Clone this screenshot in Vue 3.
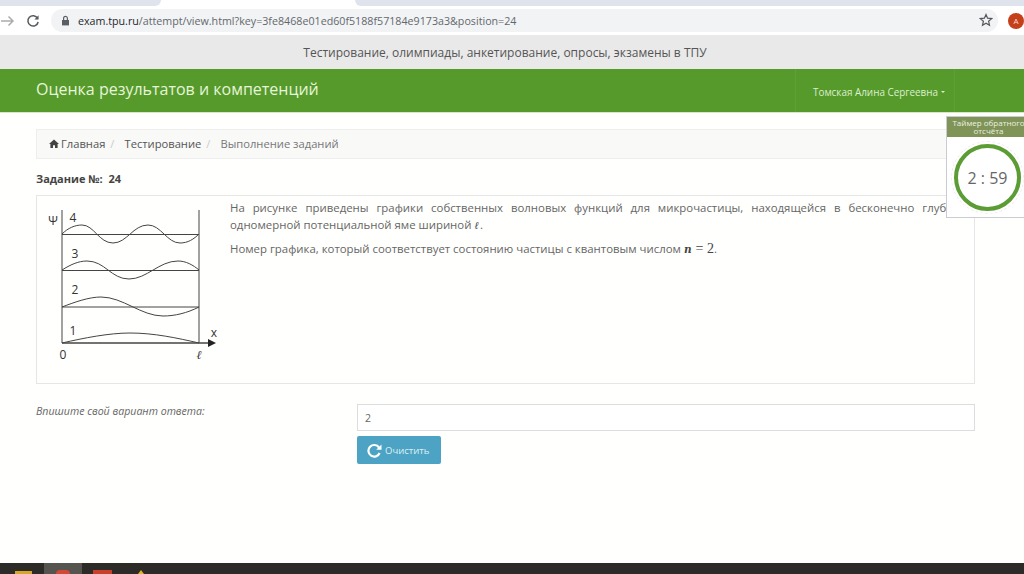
<template>
  <div class="page">
    <div class="tabs">
      <div class="tab t1"></div>
      <div class="tab t2"></div>
    </div>
    <div class="toolbar">
      <svg class="nav-ic" width="14" height="14" viewBox="0 0 14 14"><path d="M0 7H12M7.5 2.5L12 7L7.5 11.5" fill="none" stroke="#a9acaf" stroke-width="1.5"/></svg>
      <svg class="reload" width="14" height="14" viewBox="0 0 14 14"><path d="M11.6 4.2A5.2 5.2 0 1 0 12.2 8" fill="none" stroke="#55595c" stroke-width="1.5"/><path d="M12.6 1.2V5.4H8.4Z" fill="#55595c"/></svg>
      <div class="omni">
        <svg width="9" height="11" viewBox="0 0 9 11"><path d="M1 5H8V10.4H1Z" fill="#5b5f63"/><path d="M2.6 5V3.2a1.9 1.9 0 0 1 3.8 0V5" fill="none" stroke="#5b5f63" stroke-width="1.2"/></svg>
        <span class="url"><b>exam.tpu.ru</b>/attempt/view.html?key=3fe8468e01ed60f5188f57184e9173a3&amp;position=24</span>
        <svg class="star" width="14" height="14" viewBox="0 0 14 14"><path d="M7 1.5L8.6 5.2L12.7 5.6L9.6 8.2L10.5 12.3L7 10.2L3.5 12.3L4.4 8.2L1.3 5.6L5.4 5.2Z" fill="none" stroke="#55595c" stroke-width="1.2"/></svg>
      </div>
      <div class="avatar">A</div>
    </div>
    <div class="band">Тестирование, олимпиады, анкетирование, опросы, экзамены в ТПУ</div>
    <header class="navbar">
      <div class="brand">Оценка результатов и компетенций</div>
      <div class="user">Томская Алина Сергеевна<i class="caret"></i></div>
    </header>
    <main class="content">
      <nav class="crumbs">
        <svg width="10" height="9" viewBox="0 0 10 9"><path d="M5 0.5L10 5H8.6V9H6V6.2H4V9H1.4V5H0Z" fill="#444"/></svg>
        <span class="c-link first">Главная</span><span class="sep">/</span>
        <span class="c-link">Тестирование</span><span class="sep">/</span>
        <span class="c-now">Выполнение заданий</span>
      </nav>
      <h4 class="task">Задание №:&nbsp; 24</h4>
      <section class="panel">
        <svg class="graph" width="191" height="172" viewBox="0 0 191 172">
          <g fill="none" stroke="#444" stroke-width="1">
            <path d="M23 13V146M160 13V146"/>
            <path d="M23 146H171" stroke-width="1.4"/>
            <path d="M23 37.5H160M23 73.5H160M23 110H160"/>
            <path d="M23 146C45 141 70 136 91 136C115 136 138 141 160 146"/>
            <path d="M23 110C36 105 50 100 62 100C84 100 102 119 124 119C136 119 148 116 160 110"/>
            <path d="M23 73C31 68 39 64 48 64C66 64 72 82 90 82C108 82 120 64 139 64C147 64 154 68 160 73"/>
            <path d="M23 37C29 31 36 28 43 28C55 28 60 46 74 46C88 46 94 28 109 28C122 28 128 46 141 46C149 46 155 42 160 37"/>
          </g>
          <path d="M169 142L177 146L169 150Z" fill="#222"/>
          <g class="g-label">
            <text x="14" y="27.500" class="psi">Ψ</text>
            <text x="34" y="24.500">4</text>
            <text x="36" y="60.500">3</text>
            <text x="36" y="96.500">2</text>
            <text x="34" y="137.500">1</text>
            <text x="175" y="139.500">x</text>
            <text x="24" y="161.500">0</text>
            <text x="160" y="161.500" class="ell">ℓ</text>
          </g>
        </svg>
        <div class="question">
          <p class="justify">На рисунке приведены графики собственных волновых функций для микрочастицы, находящейся в бесконечно глубокой одномерной потенциальной яме шириной <em class="math">ℓ</em>.</p>
          <p>Номер графика, который соответствует состоянию частицы с квантовым числом <em class="math">n</em> <span class="math-r">= 2</span>.</p>
        </div>
      </section>
      <div class="answer">
        <label class="a-label">Впишите свой вариант ответа:</label>
        <div class="a-col">
          <div class="input">2</div>
          <button class="btn">
            <svg width="15" height="15" viewBox="0 0 15 15"><path d="M12 4.500A5.800 5.800 0 1 0 12.600 10" fill="none" stroke="#fff" stroke-width="2.200"/><path d="M14.500 1.500V6.800H9.200Z" fill="#fff"/></svg>
            Очистить
          </button>
        </div>
      </div>
    </main>
    <aside class="timer">
      <div class="t-head">Таймер обратного отсчёта</div>
      <div class="t-body">
        <div class="ring">2 : 59</div>
      </div>
    </aside>
    <footer class="taskbar">
      <span class="tb-ic folder"></span>
      <span class="tb-active"><span class="tb-ic red"></span></span>
      <span class="tb-ic office"></span>
      <span class="tb-ic yellow"></span>
    </footer>
  </div>
</template>

<script setup>
</script>

<style>
html, body { margin: 0; background: #fff; }
</style>

<style scoped>
* { box-sizing: border-box; }
.page {
  position: relative; width: 1024px; height: 574px; overflow: hidden;
  display: flex; flex-direction: column;
  font-family: "Open Sans", "Noto Sans", sans-serif; color: #555; background: #fffffd;
}
.tabs { height: 6px; display: flex; justify-content: space-between; background: #fff; flex: none; }
.tab { height: 6px; background: #dfe3ec; }
.t1 { width: 161px; border-radius: 0 0 6px 0; }
.t2 { width: 669px; border-radius: 0 0 0 6px; }
.toolbar { height: 29px; flex: none; display: flex; align-items: center; background: #fff; }
.nav-ic { margin-left: 1px; }
.reload { margin-left: 11px; }
.omni {
  margin-left: 11px; width: 948px; height: 23px; background: #f1f3f5; border-radius: 12px;
  display: flex; align-items: center; padding-left: 10px; position: relative;
}
.url { margin-left: 8px; font-size: 10.700px; color: #64686c; white-space: nowrap; }
.url b { font-weight: 400; color: #26282b; }
.star { position: absolute; left: 928px; top: 4px; }
.avatar {
  margin-left: 10px; width: 16px; height: 16px; border-radius: 50%; background: #c5401a; color: #f5dcd0;
  font-size: 8px; display: flex; align-items: center; justify-content: center;
}
.band {
  height: 34px; flex: none; background: #e9e9e9; color: #555; font-size: 12px;
  display: flex; align-items: center; justify-content: center; padding-right: 14px;
}
.navbar {
  height: 44px; flex: none; background: #559a2b; display: flex; align-items: center; padding-left: 36px; position: relative;
  border-bottom: 1px solid #d6e8c8;
}
.brand { color: #e6f5d8; font-size: 16px; padding-bottom: 4px; }
.user {
  position: absolute; left: 795px; top: 0; width: 160px; height: 43px;
  border-left: 1px solid #5fa036; border-right: 1px solid #5fa036;
  color: #dcefcc; font-size: 9.900px; display: flex; align-items: center; padding: 2px 0 0 17px;
}
.caret { width: 0; height: 0; border: 2.500px solid transparent; border-top-color: #dcefcc; border-bottom: 0; margin-left: 3px; }
.content { flex: 1; padding: 16px 49px 0 36px; display: flex; flex-direction: column; }
.crumbs {
  height: 30px; background: #f9f9f8; border: 1px solid #eee; display: flex; align-items: center; padding: 0 0 2px 12px;
  font-size: 11.200px; color: #555;
}
.c-link.first { margin-left: 2px; }
.sep { color: #ccc; margin: 0 10px 0 5px; }
.c-now { color: #777; }
.task { margin: 13px 0 0; height: 23px; font-size: 11px; line-height: 14px; font-weight: 700; color: #444; }
.panel {
  height: 189px; border: 1px solid #e6e6e6; display: flex; align-items: flex-start; padding: 1px 0 0 2px;
}
.graph { flex: none; }
.g-label text { font-family: "Open Sans", sans-serif; font-size: 12px; fill: #333; text-anchor: middle; }
.g-label .ell { font-family: "DejaVu Serif", serif; font-style: italic; }
.question { margin-top: 2px; width: 743px; font-size: 11.400px; line-height: 17px; color: #666; flex: none; }
.question p { margin: 0 0 6px; }
.justify { text-align: justify; width: 743px; }
.math { font-family: "DejaVu Serif", serif; font-style: italic; font-weight: 700; font-size: 10.500px; color: #444; margin-right: 1px; }
.math-r { font-family: "Liberation Serif", serif; font-size: 14px; color: #444; }
.answer { display: flex; margin-top: 20px; }
.a-label { width: 321px; font-size: 10.600px; font-style: italic; color: #666; line-height: 14px; }
.a-col { width: 618px; display: flex; flex-direction: column; align-items: flex-start; }
.input {
  width: 100%; height: 27px; border: 1px solid #ddd; font-size: 10.500px; color: #666; display: flex; align-items: center; padding-left: 7px; background: #fff;
}
.btn {
  margin-top: 5px; width: 84px; height: 28px; background: #4ca3c3; border: 0; border-radius: 2px; color: #dff0f5;
  font: 9.500px "Open Sans", sans-serif; display: flex; align-items: center; gap: 3px; padding: 0 0 0 10px;
}
.timer { position: absolute; left: 946px; top: 116px; width: 90px; height: 102px; background: #fff; border: 1px solid #c9ccd0; }
.t-head {
  width: 78px; height: 20px; background: #7f9456; color: #eef0e4; font-size: 8px; line-height: 8px; text-align: center; padding: 2px 0 0 5px;
}
.t-body { padding: 7px 0 0 7px; }
.ring {
  width: 67px; height: 67px; border: 4px solid #5b9c34; border-radius: 50%;
  outline: 1px dashed #f3ecec; outline-offset: 2px;
  display: flex; align-items: center; justify-content: center; font-size: 16px; color: #666; white-space: nowrap;
}
.taskbar { position: absolute; left: 0; right: 0; top: 563px; height: 11px; background: #2c2b27; display: flex; align-items: flex-start; padding-left: 15px; }
.tb-active { width: 38px; height: 11px; background: #55544f; margin-left: 12px; display: flex; justify-content: center; padding-top: 7px; }
.tb-ic { display: block; }
.folder { width: 17px; height: 3px; background: #d8a627; margin-top: 8px; }
.red { width: 14px; height: 4px; background: #d24a37; border-radius: 7px 7px 0 0; }
.office { width: 19px; height: 4px; background: #c8402c; margin: 7px 0 0 11px; }
.yellow { width: 0; height: 0; border: 3px solid transparent; border-bottom: 4px solid #e0b52c; border-top: 0; margin: 7px 0 0 26px; }
</style>
